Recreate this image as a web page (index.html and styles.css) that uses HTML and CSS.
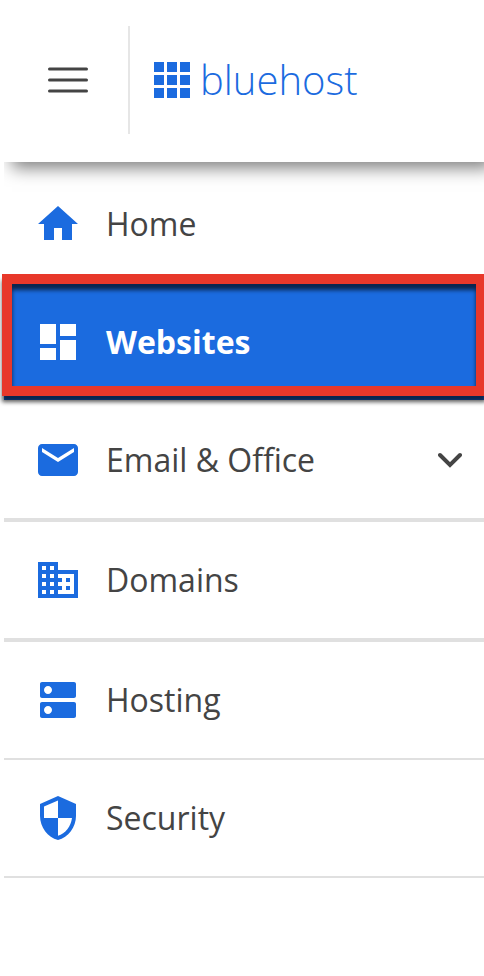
FILE: index.html
```html
<!DOCTYPE html>
<html lang="en">
<head>
  <meta charset="utf-8">
  <meta name="viewport" content="width=device-width, initial-scale=1">
  <title>Bluehost</title>
  <link rel="stylesheet" href="styles.css">
</head>
<body>
  <header class="header">
    <button type="button" class="menu-btn" aria-label="Menu">
      <svg width="40" height="26" viewBox="0 0 40 26" stroke="currentColor" stroke-width="3" stroke-linecap="round">
        <path d="M1.5 2h37M1.5 13h37M1.5 24h37"/>
      </svg>
    </button>
    <a href="#" class="logo">
      <svg width="36" height="36" viewBox="0 0 36 36" fill="currentColor">
        <path d="M0 0h10v10H0zM13 0h10v10H13zM26 0h10v10H26zM0 13h10v10H0zM13 13h10v10H13zM26 13h10v10H26zM0 26h10v10H0zM13 26h10v10H13zM26 26h10v10H26z"/>
      </svg>
      <span class="logo-text">bluehost</span>
    </a>
  </header>

  <nav class="nav">
    <ul class="nav-list">
      <li class="nav-item plain">
        <a href="#" class="nav-link">
          <svg class="icon" viewBox="0 0 24 24"><path d="M10 20v-6h4v6h5v-8h3L12 3 2 12h3v8z"/></svg>
          <span>Home</span>
        </a>
      </li>
      <li class="nav-item plain active">
        <a href="#" class="nav-link" aria-current="page">
          <svg class="icon" viewBox="0 0 24 24"><path d="M3 13h8V3H3v10zm0 8h8v-6H3v6zm10 0h8V11h-8v10zm0-18v6h8V3h-8z"/></svg>
          <span>Websites</span>
        </a>
      </li>
      <li class="nav-item thick">
        <a href="#" class="nav-link">
          <svg class="icon" viewBox="0 0 24 24"><path d="M20 4H4c-1.1 0-1.99.9-1.99 2L2 18c0 1.100.9 2 2 2h16c1.100 0 2-.9 2-2V6c0-1.100-.9-2-2-2zm0 4l-8 5-8-5V6l8 5 8-5v2z"/></svg>
          <span>Email &amp; Office</span>
          <svg class="chevron" width="24" height="16" viewBox="0 0 24 16"><path d="M2 3l10 10L22 3"/></svg>
        </a>
      </li>
      <li class="nav-item thick">
        <a href="#" class="nav-link">
          <svg class="icon" viewBox="0 0 24 24"><path d="M12 7V3H2v18h20V7H12zM6 19H4v-2h2v2zm0-4H4v-2h2v2zm0-4H4V9h2v2zm0-4H4V5h2v2zm4 12H8v-2h2v2zm0-4H8v-2h2v2zm0-4H8V9h2v2zm0-4H8V5h2v2zm10 12h-8v-2h2v-2h-2v-2h2v-2h-2V9h8v10zm-2-8h-2v2h2v-2zm0 4h-2v2h2v-2z"/></svg>
          <span>Domains</span>
        </a>
      </li>
      <li class="nav-item">
        <a href="#" class="nav-link">
          <svg class="icon" viewBox="0 0 24 24"><path d="M20 13H4c-.55 0-1 .45-1 1v6c0 .55.45 1 1 1h16c.55 0 1-.45 1-1v-6c0-.55-.45-1-1-1zM7 19c-1.100 0-2-.9-2-2s.9-2 2-2 2 .9 2 2-.9 2-2 2zM20 3H4c-.55 0-1 .45-1 1v6c0 .55.45 1 1 1h16c.55 0 1-.45 1-1V4c0-.55-.45-1-1-1zM7 9c-1.100 0-2-.9-2-2s.9-2 2-2 2 .9 2 2-.9 2-2 2z"/></svg>
          <span>Hosting</span>
        </a>
      </li>
      <li class="nav-item">
        <a href="#" class="nav-link">
          <svg class="icon" viewBox="0 0 24 24"><path d="M12 1L3 5v6c0 5.550 3.840 10.740 9 12 5.160-1.260 9-6.450 9-12V5l-9-4zm0 10.990h7c-.53 4.120-3.280 7.790-7 8.940V12H5V6.300l7-3.110v8.800z"/></svg>
          <span>Security</span>
        </a>
      </li>
    </ul>
  </nav>
</body>
</html>
```

FILE: styles.css
```css
body {
  margin: 0;
  background: #fff;
  color: #444;
  font-family: 'Open Sans', 'Noto Sans', sans-serif;
  overflow-x: hidden;
}

.header {
  display: flex;
  align-items: center;
  height: 162px;
  margin-left: 4px;
  padding: 0 24px 2px 0;
  box-sizing: border-box;
  box-shadow: 8px 6px 16px rgba(0, 0, 0, 0.5);
  /* keep the shadow below the bar only */
  clip-path: inset(0 0 -30px 0);
}

.menu-btn {
  display: flex;
  align-items: center;
  height: 108px;
  padding: 0 40px 0 44px;
  border: none;
  border-right: 2px solid #e6e6e6;
  background: none;
  color: #444;
  cursor: pointer;
}

.logo {
  display: flex;
  align-items: center;
  gap: 10px;
  margin-left: 24px;
  color: #1b6bdf;
  text-decoration: none;
}

.logo-text {
  font-size: 40px;
  font-weight: 300;
  line-height: 48px;
}

.nav {
  margin-left: 4px;
  padding-top: 4px;
}

.nav-list {
  list-style: none;
  margin: 0;
  padding: 0;
}

.nav-item {
  border-bottom: 2px solid #e0e0e0;
}

.nav-item.thick {
  border-bottom-width: 4px;
}

.nav-item.plain {
  border-bottom-color: transparent;
}

.nav-link {
  display: flex;
  align-items: center;
  gap: 24px;
  height: 116px;
  padding: 0 22px 0 30px;
  color: inherit;
  font-size: 32px;
  line-height: 44px;
  text-decoration: none;
}

.icon {
  width: 48px;
  height: 48px;
  fill: #1b6bdf;
}

.chevron {
  margin-left: auto;
  fill: none;
  stroke: #444;
  stroke-width: 4;
  stroke-linecap: round;
}

/* current page */
.active {
  position: relative;
}

.active .nav-link {
  background: #1b6bdf;
  color: #fff;
  font-weight: 700;
}

.active .icon {
  fill: #fff;
}

.active::after {
  content: "";
  position: absolute;
  top: -10px;
  right: -2px;
  bottom: 4px;
  left: -2px;
  border: 10px solid #e8382a;
  filter: drop-shadow(0 6px 2px rgba(0, 0, 0, 0.65));
  pointer-events: none;
}
```
